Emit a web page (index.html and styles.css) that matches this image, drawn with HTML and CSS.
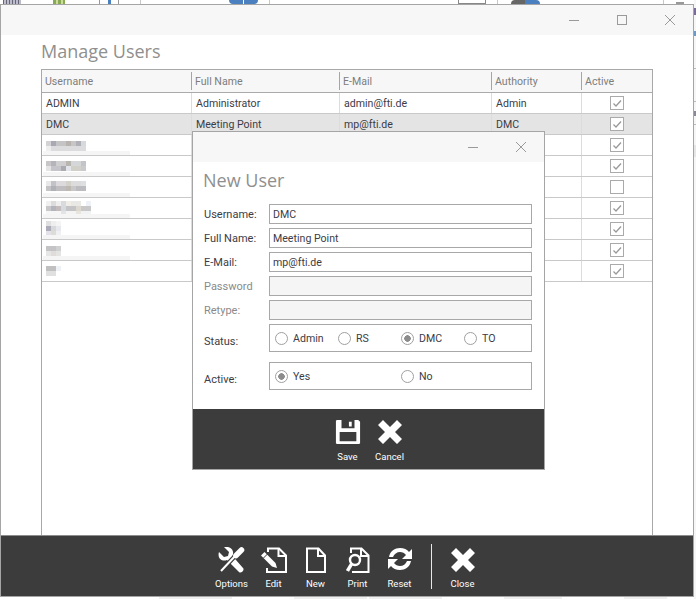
FILE: index.html
```html
<!DOCTYPE html>
<html lang="en">
<head>
<meta charset="utf-8">
<title>Manage Users</title>
<link rel="stylesheet" href="styles.css">
</head>
<body>
<svg class="defs" width="0" height="0">
  <symbol id="chk" viewBox="0 0 14 14"><rect x=".5" y=".5" width="13" height="13" fill="#fff" stroke="#aaa"/><path d="M3.500 7.500l2.500 2.500 5-5.500" fill="none" stroke="#999" stroke-width="1.300"/></symbol>
  <symbol id="unchk" viewBox="0 0 14 14"><rect x=".5" y=".5" width="13" height="13" fill="#fff" stroke="#aaa"/></symbol>
  <symbol id="cross" viewBox="0 -1 24 26"><path d="M0 5l5-5 7 7 7-7 5 5-7 7 7 7-5 5-7-7-7 7-5-5 7-7z" fill="#fff"/></symbol>
</svg>
<div class="desk-strip">
  <span class="bit bit-grey"></span><span class="bit bit-green"></span><span class="bit bit-box"></span><span class="bit bit-line l1"></span><span class="bit bit-blue"></span><span class="bit bit-line l2"></span><span class="bit bit-box2"></span><span class="bit bit-line l3"></span><span class="bit bit-round"></span><span class="bit bit-line l4"></span><span class="bit bit-dash"></span>
</div>
<div class="desk-side"></div>
<main class="window">
  <div class="titlebar">
    <svg class="wbtn" width="12" height="12" viewBox="0 0 12 12"><path d="M1 6.500h10" stroke="#9a9a9a" fill="none"/></svg>
    <svg class="wbtn" width="12" height="12" viewBox="0 0 12 12"><rect x="1.500" y="1.500" width="9" height="9" stroke="#9a9a9a" fill="none"/></svg>
    <svg class="wbtn" width="12" height="12" viewBox="0 0 12 12"><path d="M1 1l10 10M11 1L1 11" stroke="#9a9a9a" fill="none"/></svg>
  </div>
  <div class="content">
    <h1 class="heading">Manage Users</h1>
    <div class="grid">
      <div class="row head"><div>Username</div><div>Full Name</div><div>E-Mail</div><div>Authority</div><div>Active</div></div>
      <div class="row"><div>ADMIN</div><div>Administrator</div><div>admin@fti.de</div><div>Admin</div><div class="chk"><svg class="cb"><use href="#chk"/></svg></div></div>
      <div class="row sel"><div>DMC</div><div>Meeting Point</div><div>mp@fti.de</div><div>DMC</div><div class="chk"><svg class="cb"><use href="#chk"/></svg></div></div>
      <div class="row"><div class="blurcell"><svg class="mosaic m6" width="40" height="15" viewBox="0 0 8 3"><rect width="1" height="1" fill="#d5d2d5"/><rect x="1" width="1" height="1" fill="#a9a9b4"/><rect x="2" width="2" height="1" fill="#c4c4c6"/><rect x="4" width="1" height="1" fill="#b8b3ae"/><rect x="5" width="1" height="1" fill="#c6c6c6"/><rect x="6" width="1" height="1" fill="#b0b0b6"/><rect x="7" width="1" height="1" fill="#d5dadd"/><rect y="1" width="1" height="1" fill="#eee"/><rect x="1" y="1" width="7" height="1" fill="#dcdcdf"/></svg><span class="smear"></span></div><div></div><div></div><div></div><div class="chk"><svg class="cb"><use href="#chk"/></svg></div></div>
      <div class="row"><div class="blurcell"><svg class="mosaic m5" width="40" height="15" viewBox="0 0 8 3"><rect width="1" height="1" fill="#c8c6c8"/><rect x="1" width="1" height="1" fill="#b4b4ba"/><rect x="2" width="2" height="1" fill="#cfcfd2"/><rect x="4" width="1" height="1" fill="#b9b5b0"/><rect x="5" width="2" height="1" fill="#d4d6d8"/><rect x="7" width="1" height="1" fill="#c2c4c8"/><rect y="1" width="1" height="1" fill="#e4e4e4"/><rect x="1" y="1" width="2" height="1" fill="#c4c4ca"/><rect x="3" y="1" width="1" height="1" fill="#aaaab0"/><rect x="4" y="1" width="1" height="1" fill="#e2e6ea"/><rect x="5" y="1" width="2" height="1" fill="#d0d0c8"/><rect x="7" y="1" width="1" height="1" fill="#c8cace"/></svg><span class="smear"></span></div><div></div><div></div><div></div><div class="chk"><svg class="cb"><use href="#chk"/></svg></div></div>
      <div class="row"><div class="blurcell"><svg class="mosaic m4" width="40" height="15" viewBox="0 0 8 3"><rect width="1" height="1" fill="#e8e8e8"/><rect x="1" width="1" height="1" fill="#c2c2c8"/><rect x="2" width="2" height="1" fill="#dcdadc"/><rect x="4" width="1" height="1" fill="#d4d0ca"/><rect x="5" width="2" height="1" fill="#dddcdd"/><rect x="7" width="1" height="1" fill="#dde0e2"/><rect y="1" width="1" height="1" fill="#c4c4c6"/><rect x="1" y="1" width="1" height="1" fill="#b0b0b8"/><rect x="2" y="1" width="2" height="1" fill="#c0bdc0"/><rect x="4" y="1" width="1" height="1" fill="#bdb8b2"/><rect x="5" y="1" width="1" height="1" fill="#c8c8c8"/><rect x="6" y="1" width="2" height="1" fill="#bcbcc0"/></svg><span class="smear"></span></div><div></div><div></div><div></div><div class="chk"><svg class="cb"><use href="#unchk"/></svg></div></div>
      <div class="row"><div class="blurcell"><svg class="mosaic m3" width="45" height="15" viewBox="0 0 9 3"><rect width="1" height="1" fill="#f0f0f0"/><rect x="1" width="1" height="1" fill="#dcdcdc"/><rect x="2" width="1" height="1" fill="#eee"/><rect x="3" width="1" height="1" fill="#d8dade"/><rect x="4" width="1" height="1" fill="#f0ece8"/><rect x="5" width="2" height="1" fill="#e8e8e4"/><rect x="8" width="1" height="1" fill="#eef2f6"/><rect y="1" width="1" height="1" fill="#c8c8ca"/><rect x="1" y="1" width="1" height="1" fill="#b4b4bc"/><rect x="2" y="1" width="1" height="1" fill="#c4bcbc"/><rect x="3" y="1" width="1" height="1" fill="#d4dae0"/><rect x="4" y="1" width="2" height="1" fill="#c4c4c6"/><rect x="6" y="1" width="1" height="1" fill="#dcd8d0"/><rect x="7" y="1" width="2" height="1" fill="#c8c8c8"/><rect y="2" width="3" height="1" fill="#f6f6f6"/><rect x="3" y="2" width="1" height="1" fill="#e4e4e6"/><rect x="4" y="2" width="2" height="1" fill="#f4f4f4"/><rect x="6" y="2" width="1" height="1" fill="#e8e4de"/><rect x="7" y="2" width="2" height="1" fill="#f0f2f4"/></svg><span class="smear"></span></div><div></div><div></div><div></div><div class="chk"><svg class="cb"><use href="#chk"/></svg></div></div>
      <div class="row"><div class="blurcell"><svg class="mosaic m2" width="15" height="15" viewBox="0 0 3 3"><rect width="1" height="1" fill="#e0e0e0"/><rect x="1" width="1" height="1" fill="#eee"/><rect x="2" width="1" height="1" fill="#f4f4f4"/><rect y="1" width="1" height="1" fill="#acacba"/><rect x="1" y="1" width="1" height="1" fill="#d8d8d8"/><rect x="2" y="1" width="1" height="1" fill="#e6e8ee"/><rect y="2" width="1" height="1" fill="#e4e2e8"/><rect x="1" y="2" width="1" height="1" fill="#dcdcd8"/><rect x="2" y="2" width="1" height="1" fill="#eef0f2"/></svg><span class="smear"></span></div><div></div><div></div><div></div><div class="chk"><svg class="cb"><use href="#chk"/></svg></div></div>
      <div class="row"><div class="blurcell"><svg class="mosaic m6" width="15" height="15" viewBox="0 0 3 3"><rect width="2" height="1" fill="#c4c4c6"/><rect x="2" width="1" height="1" fill="#d0d0d0"/><rect y="1" width="1" height="1" fill="#e6e6e6"/><rect x="1" y="1" width="1" height="1" fill="#e0dcda"/><rect x="2" y="1" width="1" height="1" fill="#e4e4e4"/></svg><span class="smear"></span></div><div></div><div></div><div></div><div class="chk"><svg class="cb"><use href="#chk"/></svg></div></div>
      <div class="row"><div class="blurcell"><svg class="mosaic m5" width="15" height="15" viewBox="0 0 3 3"><rect width="2" height="1" fill="#c0c0c0"/><rect x="2" width="1" height="1" fill="#eef2f6"/><rect y="1" width="2" height="1" fill="#e0e0e0"/></svg></div><div></div><div></div><div></div><div class="chk"><svg class="cb"><use href="#chk"/></svg></div></div>
    </div>
  </div>
  <footer class="toolbar">
    <div class="tool"><svg width="27" height="26" viewBox="0 0 27 26"><path d="M1 5l5 5 4-1 1-4-5-5c5-1 10 2 9 7l-.5 2L25 21c2 2-2 6-4 4L9 13c-5 2-10-2-8-8z" fill="#fff"/><path d="M18 8L3 24" stroke="#3c3c3c" stroke-width="4.500" fill="none"/><path d="M18 8L3 24" stroke="#fff" stroke-width="2" fill="none"/><path d="M23.500 3L18 8.500" stroke="#fff" stroke-width="5.500" stroke-linecap="round" fill="none"/></svg><span>Options</span></div>
    <div class="tool"><svg width="27" height="26" viewBox="0 0 27 26"><path d="M8 5V1.500h11l7 7V25H7v-4" fill="none" stroke="#fff" stroke-width="2"/><path d="M18.500 2v7H26" fill="none" stroke="#fff" stroke-width="2"/><path d="M1 8.500L4.500 5l11 11 1.500 5-5-1.500z" fill="#fff"/><path d="M3.500 11L7.500 7" stroke="#3c3c3c" fill="none"/></svg><span>Edit</span></div>
    <div class="tool"><svg width="20" height="26" viewBox="0 0 20 26"><path d="M1 1.500h11.500l6.500 7V25H1zM12 2v7h7" fill="none" stroke="#fff" stroke-width="2"/></svg><span>New</span></div>
    <div class="tool"><svg width="24" height="26" viewBox="0 0 24 26"><path d="M5 6V1.500h10.500l7 7V25H6" fill="none" stroke="#fff" stroke-width="2"/><path d="M15 2v7h7.500" fill="none" stroke="#fff" stroke-width="2"/><circle cx="9" cy="13" r="5" fill="#3c3c3c" stroke="#fff" stroke-width="2.400"/><path d="M5.500 17L1.500 24" stroke="#fff" stroke-width="3.500" fill="none"/></svg><span>Print</span></div>
    <div class="tool"><svg width="26" height="26" viewBox="1 2 26 26"><path d="M3 12C4 6 9 3 14 3c4 0 7 1.500 9 4l3-3v10H16l4-4c-1.500-2-3.500-3-6-3-3 0-6 2-7 5z" fill="#fff"/><path d="M25 16c-1 6-6 9-11 9-4 0-7-1.500-9-4l-3 3V14h10l-4 4c1.500 2 3.500 3 6 3 3 0 6-2 7-5z" fill="#fff"/></svg><span>Reset</span></div>
    <div class="tool-sep"></div>
    <div class="tool"><svg width="24" height="26"><use href="#cross"/></svg><span>Close</span></div>
  </footer>
</main>
<div class="floor"></div>

<section class="dialog">
  <div class="titlebar dlg-title">
    <svg class="wbtn" width="12" height="12" viewBox="0 0 12 12"><path d="M1 6.500h10" stroke="#9a9a9a" fill="none"/></svg>
    <svg class="wbtn" width="12" height="12" viewBox="0 0 12 12"><path d="M1 1l10 10M11 1L1 11" stroke="#9a9a9a" fill="none"/></svg>
  </div>
  <h2 class="dlg-heading">New User</h2>
  <form class="form">
    <label class="lbl">Username:</label><div class="field">DMC</div>
    <label class="lbl">Full Name:</label><div class="field">Meeting Point</div>
    <label class="lbl">E-Mail:</label><div class="field">mp@fti.de</div>
    <label class="lbl dim">Password</label><div class="field off"></div>
    <label class="lbl dim">Retype:</label><div class="field off"></div>
    <label class="lbl low">Status:</label>
    <div class="group four">
      <span class="radio"><i class="dot"></i>Admin</span><span class="radio"><i class="dot"></i>RS</span><span class="radio"><i class="dot on"></i>DMC</span><span class="radio"><i class="dot"></i>TO</span>
    </div>
    <label class="lbl low spaced">Active:</label>
    <div class="group two spaced">
      <span class="radio"><i class="dot on"></i>Yes</span><span class="radio"><i class="dot"></i>No</span>
    </div>
  </form>
  <footer class="dlg-foot">
    <div class="tool"><svg width="26" height="26" viewBox="0 0 28 28"><path fill-rule="evenodd" d="M2 1h23l2 2v23l-1 1H2l-1-1V2zM7 1v9h14V1zM15 3v5h3V3zM5 14v10h18V14z" fill="#fff"/></svg><span>Save</span></div>
    <div class="tool"><svg width="24" height="26"><use href="#cross"/></svg><span>Cancel</span></div>
  </footer>
</section>
</body>
</html>
```

FILE: styles.css
```css
* { box-sizing: border-box; }
html, body { margin: 0; height: 100%; }
body { position: relative; width: 696px; height: 599px; overflow: hidden; background: #fff; font-family: Roboto, "Liberation Sans", sans-serif; font-size: 11px; color: #3c3c46; }
.defs { position: absolute; }

.desk-strip { height: 4px; display: flex; overflow: hidden; background: #fff; }
.bit { height: 4px; display: block; flex: none; }
.bit-grey { width: 18px; margin-left: 3px; background: repeating-linear-gradient(90deg, #667 0 1px, #bbc 1px 3px); }
.bit-green { width: 12px; margin-left: 32px; background: repeating-linear-gradient(90deg, #8a5 0 3px, #cd9 3px 5px); }
.bit-box { width: 20px; margin-left: 34px; background: linear-gradient(90deg, #fff 8px, #4a7fc0 8px 11px, #fff 11px); border: 1px solid #999; border-width: 0 1px; }
.bit-line { width: 1px; background: #c8c8c8; }
.l1 { margin-left: 21px; }
.bit-blue { width: 29px; margin-left: 88px; background: linear-gradient(90deg, #4a7fc0 14px, #fff 14px 15px, #4a7fc0 15px); border-radius: 0 0 8px 8px; }
.l2 { margin-left: 11px; }
.bit-box2 { width: 28px; margin-left: 188px; background: #fff; border: 1px solid #888; border-width: 0 1px 1px; }
.l3 { margin-left: 11px; }
.bit-round { width: 29px; margin-left: 13px; background: linear-gradient(90deg, #666 50%, #4a7fc0 50%); border-radius: 8px 8px 0 0; }
.l4 { margin-left: 123px; }
.bit-dash { width: 8px; height: 2px; margin: 2px 0 0 12px; background: #999; }
.desk-side { position: absolute; right: 0; top: 0; width: 2px; height: 599px; background: linear-gradient(180deg, #f6f6f6 8px, #7a6aa0 8px 15px, #f6f6f6 15px 31px, #6a9ac8 31px 36px, #f6f6f6 36px 68px, #bbb 68px 69px, #f6f6f6 69px 101px, #bbb 101px 102px, #f6f6f6 102px 111px, #889 111px 116px, #f6f6f6 116px 124px, #bbb 124px 125px, #f6f6f6 125px 145px, #e6e6e6 145px 157px, #f6f6f6 157px); }

.window { height: 593px; width: 694px; display: flex; flex-direction: column; border: 1px solid #a5a5a5; background: #fff; }
.titlebar { height: 30px; flex: none; background: #f7f7f7; display: flex; justify-content: flex-end; align-items: center; gap: 36px; padding-right: 17px; }
.wbtn { display: block; }
.content { flex: 1; min-height: 0; padding: 0 40px; display: flex; flex-direction: column; }
.heading { margin: 4px 0 6px; font-family: "Open Sans", sans-serif; font-size: 18px; line-height: 24px; font-weight: 400; color: #8f8f8f; }

.grid { flex: 1; min-height: 0; width: 612px; border: 1px solid #a8a8a8; border-bottom: 0; font-size: 10.6px; }
.row { height: 21px; display: grid; grid-template-columns: 150px 148px 152px 90px 70px; border-bottom: 1px solid #c9c9c9; line-height: 22px; }
.row > div { height: 20px; padding-left: 4px; border-right: 1px solid #dcdcdc; overflow: hidden; white-space: nowrap; }
.row > div:last-child { border-right: 0; }
.row.head { height: 23px; background: #f7f7f7; color: #7d7d7d; border-bottom: 1px solid #aaa; align-items: center; line-height: 20px; }
.row.head > div { padding-left: 3px; border-right: 1px solid #a5a5a5; height: 18px; }
.row.head > div:last-child { border-right: 0; }
.row.sel { background: #e4e4e4; }
.row > .chk { display: flex; align-items: center; justify-content: center; padding-left: 0; }
.cb { width: 14px; height: 14px; display: block; }
.blurcell { position: relative; }
.row > .blurcell { overflow: visible; }
.mosaic { position: absolute; left: 4px; display: block; }
.m6 { top: 6px; }
.m5 { top: 5px; }
.m4 { top: 4px; }
.m3 { top: 3px; }
.m2 { top: 2px; }
.smear { position: absolute; left: 1px; top: 16px; width: 87px; height: 4px; background: #f5f5f5; }

.toolbar { flex: none; height: 61px; background: #3c3c3c; border-top: 1px solid #8c8c8c; display: flex; justify-content: center; align-items: flex-start; padding-top: 8px; }
.tool { width: 42px; display: flex; flex-direction: column; align-items: center; color: #fff; font-size: 9.5px; line-height: 13px; gap: 4px; padding-top: 3px; }
.tool svg { display: block; }
.tool-sep { width: 1px; height: 45px; margin: 0 10px; background: #e8e8e8; }
.floor { height: 2px; background: linear-gradient(90deg, #fff 159px, #efefef 159px 232px, #fff 232px 294px, #efefef 294px 367px, #fff 367px 369px, #efefef 369px 442px, #fff 442px 504px, #efefef 504px 562px, #fff 562px 624px, #efefef 624px 667px, #fff 667px); }

.dialog { position: absolute; left: 192px; top: 131px; width: 353px; height: 339px; border: 1px solid #a5a5a5; background: #fff; display: flex; flex-direction: column; }
.dlg-heading { margin: 6px 0 0 10px; font-family: "Open Sans", sans-serif; font-size: 18px; line-height: 24px; font-weight: 400; color: #8f8f8f; }
.form { display: grid; grid-template-columns: 65px 263px; padding-left: 11px; margin-top: 12px; row-gap: 4px; flex: 1; align-content: start; }
.lbl { display: flex; align-items: center; color: #3c3c46; }
.lbl.dim { color: #8a8a8a; }
.lbl.low { padding-top: 6px; }
.field { height: 20px; border: 1px solid #a8a8a8; padding-left: 3px; line-height: 20px; font-size: 10.6px; background: #fff; }
.field.off { background: #f5f5f5; }
.group { height: 28px; border: 1px solid #a8a8a8; display: grid; align-items: center; padding: 2px 0 0 5px; font-size: 10.6px; }
.group.four { grid-template-columns: 63px 63px 63px 63px; }
.group.two { grid-template-columns: 126px 126px; }
.spaced { margin-top: 6px; }
.radio { display: flex; align-items: center; gap: 5px; line-height: 14px; }
.dot { width: 13px; height: 13px; margin-top: -2px; border: 1px solid #a0a0a0; border-radius: 50%; background: #fff; flex: none; }
.dot.on { background: radial-gradient(circle, #8c8c8c 0 3px, #fff 3.500px); }

.dlg-foot { flex: none; height: 60px; background: #3c3c3c; display: flex; justify-content: center; padding-top: 7px; }
.dlg-foot .tool { gap: 5px; }
```
